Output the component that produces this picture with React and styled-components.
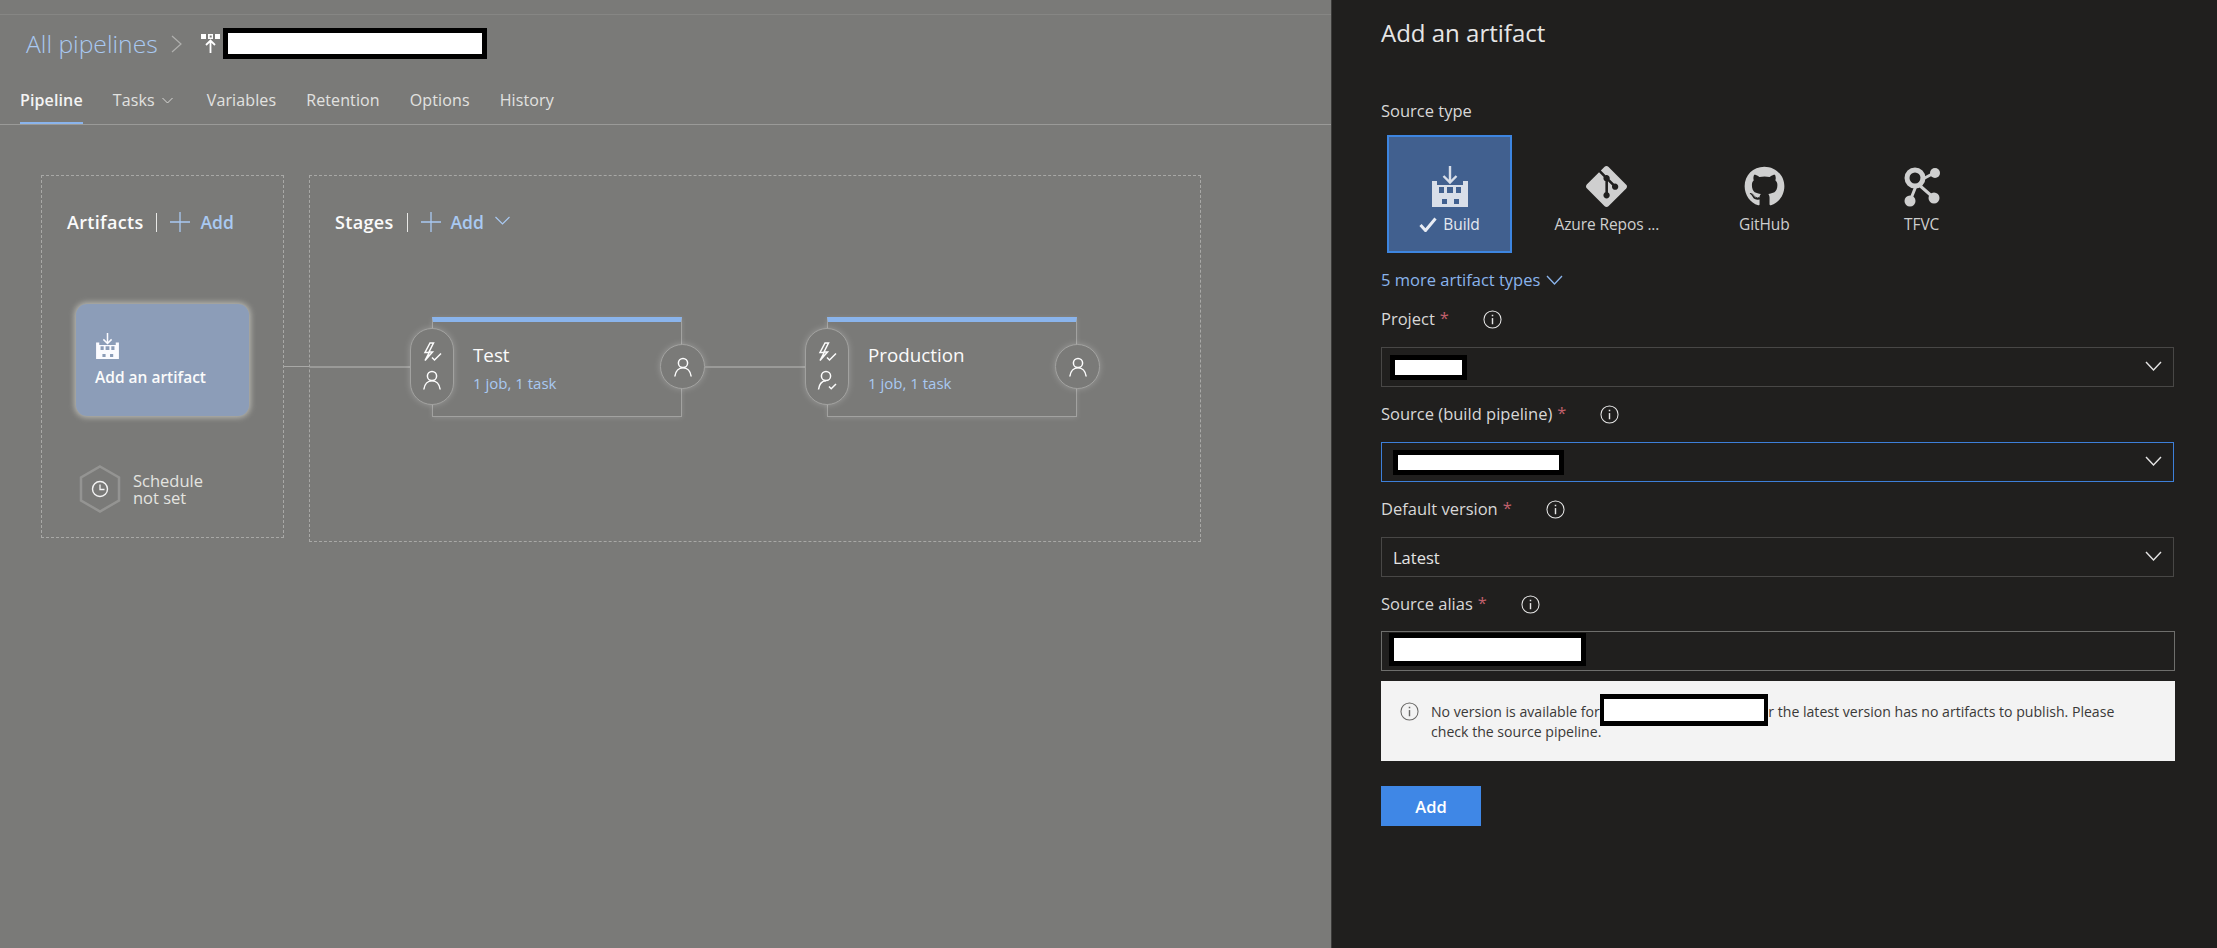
import React from "react";
import styled, { createGlobalStyle } from "styled-components";
import { FaGithub } from "react-icons/fa";
import { SiGit } from "react-icons/si";

const GlobalStyle = createGlobalStyle`
  html, body { margin: 0; padding: 0; height: 100%; overflow: hidden; }
  body { font-family: "Open Sans", "Noto Sans", "Liberation Sans", sans-serif; }
`;

const Page = styled.div`
  display: flex;
  width: 2217px;
  height: 948px;
`;
const Main = styled.main`
  flex: 1;
  background: #7a7a78;
  padding-top: 14px;
  box-sizing: border-box;
`;
const Header = styled.header`
  height: 59px;
  box-sizing: border-box;
  border-top: 1px solid #868684;
  padding: 0 0 2px 26px;
  display: flex;
  align-items: center;
`;
const Crumb = styled.a`
  font-size: 24.7px;
  font-weight: 300;
  color: #a9c9f2;
`;
const CrumbChevron = styled.svg`
  width: 11px;
  height: 18px;
  margin: 2px 19px 0 13px;
  fill: none;
  stroke: #b0b0ae;
  stroke-width: 1.2;
`;
const PipelineGlyph = styled.svg`
  width: 19px;
  height: 19px;
  margin-right: 3px;
`;
const Redact = styled.div`
  box-sizing: border-box;
  width: ${(p) => p.$w}px;
  height: ${(p) => p.$h}px;
  background: #fff;
  border: 5px solid #000;
  flex: none;
`;
const Tabs = styled.nav`
  height: 52px;
  box-sizing: border-box;
  border-bottom: 1px solid #9a9a98;
  padding: 17px 0 0 20px;
  display: flex;
  gap: 30px;
`;
const Tab = styled.a`
  height: 34px;
  box-sizing: border-box;
  line-height: 20px;
  font-size: 16px;
  letter-spacing: 0.12px;
  font-weight: ${(p) => (p.$active ? 600 : 400)};
  color: ${(p) => (p.$active ? "#f4f4f4" : "#e2e2e0")};
  border-bottom: 2px solid ${(p) => (p.$active ? "#8ab4ec" : "transparent")};
  display: flex;
  align-items: flex-start;
`;
const TabChevron = styled.svg`
  width: 11px;
  height: 20px;
  margin: 0 4px 0 7px;
  fill: none;
  stroke: #d8d8d6;
  stroke-width: 1;
`;
const Canvas = styled.section`
  display: flex;
  align-items: flex-start;
  gap: 25px;
  padding: 50px 0 0 41px;
`;
const Zone = styled.div`
  box-sizing: border-box;
  width: ${(p) => p.$w}px;
  height: ${(p) => p.$h}px;
  border: 1px dashed #a8a8a6;
  padding: 36px 0 0 25px;
`;
const ZoneHead = styled.div`
  height: 20px;
  display: flex;
  align-items: center;
`;
const ZoneTitle = styled.h3`
  margin: 0;
  font-size: 18px;
  line-height: 20px;
  font-weight: 600;
  color: #fbfbfb;
  letter-spacing: 0.32px;
`;
const Divider = styled.span`
  width: 1px;
  height: 19px;
  background: #e8e8e6;
  margin: 0 13px;
`;
const PlusIcon = styled.svg`
  width: 20px;
  height: 20px;
  stroke: #a9c9f2;
  stroke-width: 1.3;
  fill: none;
  margin-right: 10px;
`;
const AddLink = styled.a`
  font-size: 17.5px;
  font-weight: 600;
  color: #a9c9f2;
`;
const AddChevron = styled.svg`
  width: 15px;
  height: 9px;
  margin: -3px 0 0 11px;
  fill: none;
  stroke: #a9c9f2;
  stroke-width: 1.2;
`;
const ArtifactCard = styled.div`
  box-sizing: border-box;
  width: 173px;
  height: 112px;
  margin: 72px 0 0 9px;
  padding: 29px 0 0 20px;
  border-radius: 11px;
  background: #8c9db8;
  box-shadow: 0 0 6px 1px rgba(235, 235, 225, 0.65);
`;
const ArtifactLabel = styled.div`
  font-size: 15.5px;
  line-height: 20px;
  font-weight: 600;
  color: #fbfbfb;
  margin: 8px 0 0 -1px;
`;
const ScheduleRow = styled.div`
  display: flex;
  align-items: center;
  gap: 12px;
  margin: 49px 0 0 12px;
`;
const HexIcon = styled.svg`
  width: 42px;
  height: 48px;
  fill: none;
`;
const ScheduleText = styled.div`
  font-size: 16.5px;
  line-height: 17px;
  color: #e4e4e0;
`;
const StageRow = styled.div`
  display: flex;
  align-items: center;
  margin: 85px 0 0 -25px;
`;
const Connector = styled.div`
  position: relative;
  width: ${(p) => p.$w}px;
  height: 2px;
  background: #9a9a98;
  flex: none;
  ${(p) =>
    p.$lead &&
    `&::before {
      content: "";
      position: absolute;
      left: -26px;
      top: 0;
      width: 26px;
      height: 1px;
      background: #a8a8a6;
    }`}
`;
const StageNode = styled.div`
  position: relative;
  box-sizing: border-box;
  width: 295px;
  height: 100px;
  padding: 0 23px 0 22px;
  flex: none;
`;
const StageCard = styled.div`
  box-sizing: border-box;
  height: 100px;
  border: 1px solid #a2a2a0;
  border-top: 5px solid #8ab4ec;
  padding: 21px 0 0 40px;
  box-shadow: 0 1px 5px rgba(255, 255, 255, 0.15);
`;
const StageTitle = styled.div`
  font-size: 18.8px;
  line-height: 24px;
  color: #fbfbfb;
`;
const StageSub = styled.div`
  font-size: 15px;
  line-height: 20px;
  margin-top: 6px;
  color: #a9c9f2;
`;
const Pill = styled.div`
  position: absolute;
  left: 0;
  top: 11px;
  box-sizing: border-box;
  width: 44px;
  height: 77px;
  border: 1px solid #a2a2a0;
  border-radius: 22px;
  background: #7a7a78;
  box-shadow: 0 0 6px rgba(255, 255, 255, 0.25);
  display: flex;
  flex-direction: column;
  align-items: center;
  gap: 8px;
  padding-top: 13px;
`;
const Round = styled.div`
  position: absolute;
  right: 0;
  top: 27px;
  box-sizing: border-box;
  width: 45px;
  height: 45px;
  border: 1px solid #a2a2a0;
  border-radius: 50%;
  background: #7a7a78;
  box-shadow: 0 0 6px rgba(255, 255, 255, 0.25);
  display: flex;
  align-items: center;
  justify-content: center;
`;
const NodeIcon = styled.svg`
  width: 20px;
  height: 20px;
  fill: none;
  stroke: #fcfcfc;
  stroke-width: 1.5;
  flex: none;
`;
const FactorySvg = styled.svg`
  display: block;
  flex: none;
`;

const Panel = styled.aside`
  width: 886px;
  box-sizing: border-box;
  background: #201f1e;
  border-left: 1px solid #3c3b3a;
  padding: 18px 42px 0 49px;
  color: #dcdcdc;
`;
const PanelTitle = styled.h2`
  margin: 0;
  font-size: 24px;
  line-height: 30px;
  font-weight: 400;
  color: #e6e6e6;
`;
const PlainLabel = styled.div`
  margin-top: 53px;
  font-size: 16.5px;
  line-height: 20px;
  color: #d8d8d8;
`;
const TileRow = styled.div`
  display: flex;
  gap: 32.4px;
  margin: 14px 0 0 6px;
`;
const Tile = styled.div`
  box-sizing: border-box;
  width: 125px;
  height: 118px;
  flex: none;
  display: flex;
  flex-direction: column;
  align-items: center;
  padding-top: ${(p) => (p.$selected ? "29px" : "31px")};
  color: #cfcfcf;
  background: ${(p) => (p.$selected ? "#41608f" : "transparent")};
  border: ${(p) => (p.$selected ? "2px solid #3d85e0" : "none")};
  svg { display: block; flex: none; }
`;
const TileLabel = styled.div`
  margin-top: 7px;
  font-size: 15.5px;
  line-height: 20px;
  display: flex;
  align-items: center;
  gap: 6px;
  white-space: nowrap;
  letter-spacing: -0.1px;
  color: ${(p) => (p.$selected ? "#e4e8f0" : "#cfcfcf")};
`;
const CheckGlyph = styled.svg`
  width: 18px;
  height: 15px;
  fill: none;
  stroke: #e8ecf4;
  stroke-width: 3;
`;
const MoreLink = styled.a`
  display: flex;
  align-items: center;
  margin-top: 17px;
  font-size: 16.5px;
  line-height: 20px;
  color: #8ab4ec;
`;
const MoreChevron = styled.svg`
  width: 17px;
  height: 10px;
  margin-left: 6px;
  fill: none;
  stroke: #8ab4ec;
  stroke-width: 1.3;
`;
const Field = styled.div`
  margin-top: ${(p) => (p.$first ? 19 : 17)}px;
`;
const FieldLabel = styled.div`
  display: flex;
  align-items: center;
  height: 20px;
  font-size: 16.5px;
  color: #d8d8d8;
`;
const LabelText = styled.span`
  margin-top: -2px;
`;
const Required = styled.span`
  color: #c0606c;
  margin-left: 5px;
  align-self: flex-start;
  line-height: 18px;
`;
const InfoIcon = styled.svg`
  width: ${(p) => p.$size || 19}px;
  height: ${(p) => p.$size || 19}px;
  margin-left: ${(p) => p.$gap ?? 34}px;
  fill: none;
  stroke: ${(p) => p.$color || "#e6e6e6"};
  stroke-width: 1.1;
  flex: none;
`;
const Select = styled.div`
  box-sizing: border-box;
  height: 40px;
  width: 793px;
  margin-top: 18px;
  border: 1px solid ${(p) => (p.$focus ? "#3d7fd9" : "#484746")};
  display: flex;
  align-items: center;
  padding: 0 11px 0 ${(p) => p.$pad}px;
  font-size: 16.5px;
  color: #e4e4e4;
`;
const SelectValue = styled.div`
  flex: 1;
`;
const SelectChevron = styled.svg`
  width: 17px;
  height: 10px;
  margin-top: -2px;
  fill: none;
  stroke: #e4e4e4;
  stroke-width: 1.4;
`;
const TextInput = styled.div`
  box-sizing: border-box;
  height: 40px;
  width: 794px;
  margin-top: 17px;
  border: 1px solid #6e6e6c;
  padding: 1px 0 0 7px;
`;
const Message = styled.div`
  box-sizing: border-box;
  width: 794px;
  height: 80px;
  margin-top: 10px;
  padding: 21px 50px 0 19px;
  background: #f3f3f3;
  display: flex;
  align-items: flex-start;
  color: #3a3938;
`;
const MessageText = styled.p`
  margin: 0 0 0 12px;
  font-size: 14.1px;
  line-height: 20px;
`;
const InlineMask = styled.span`
  position: relative;
  display: inline-block;
  width: ${(p) => p.$w}px;
  height: 20px;
  margin-right: -8px;
  vertical-align: top;
  z-index: 1;
  &::after {
    content: "";
    position: absolute;
    left: 0;
    top: -8px;
    width: 168px;
    height: 32px;
    box-sizing: border-box;
    background: #fff;
    border: 5px solid #000;
    border-left-width: 4px;
    border-right-width: 4px;
  }
`;
const SubmitButton = styled.button`
  display: block;
  width: 100px;
  height: 40px;
  margin-top: 25px;
  border: none;
  background: #3f87e6;
  color: #fff;
  font-family: inherit;
  font-size: 16.5px;
  font-weight: 600;
`;

const Person = ({ check }) => (
  <NodeIcon viewBox="0 0 20 20">
    <circle cx={check ? 9 : 10} cy="6" r="4.6" />
    {check ? (
      <>
        <path d="M1.5 19.5C2.2 14.5 5 11 9 10.8" />
        <path d="M12 16.5l2.2 2.2L19 14" />
      </>
    ) : (
      <path d="M1.8 19.5C2.5 14 6 10.8 10 10.8s7.5 3.2 8.2 8.7" />
    )}
  </NodeIcon>
);
const Bolt = () => (
  <NodeIcon viewBox="0 0 20 20">
    <path d="M8 1L3 10.5h4.2L3 18.5l7.5-8.6H7L11.5 1zM10 15.5l2.5 2.5L19 11.5" />
  </NodeIcon>
);
const Stage = ({ name, approval }) => (
  <StageNode>
    <StageCard>
      <StageTitle>{name}</StageTitle>
      <StageSub>1 job, 1 task</StageSub>
    </StageCard>
    <Pill>
      <Bolt />
      <Person check={approval} />
    </Pill>
    <Round>
      <Person />
    </Round>
  </StageNode>
);
const Factory = ({ w = 36, h = 41, color = "currentColor" }) => (
  <FactorySvg viewBox="0 0 36 41" width={w} height={h}>
    <path fill={color} fillRule="evenodd" d="M0 41V15h5v4h26v-4h5v26zM7 21v6h5v-6zM15 21v6h6v-6zM24 21v6h5v-6zM10 33v5h5v-5zM22 33v5h5v-5z" />
    <path fill="none" stroke={color} strokeWidth="2.4" d="M18 0v16M11.5 10l6.5 6.5 6.5-6.5" />
  </FactorySvg>
);
const Tfvc = () => (
  <svg viewBox="0 0 36 41" width="36" height="41" fill="currentColor">
    <circle cx="11" cy="12" r="8" fill="none" stroke="currentColor" strokeWidth="5" />
    <circle cx="31" cy="7" r="5" />
    <circle cx="6" cy="35" r="5.5" />
    <circle cx="30" cy="32" r="5.5" />
    <path fill="none" stroke="currentColor" strokeWidth="3" d="M17 14L30 7M12 20L6 35M14 18l16 14" />
  </svg>
);
const Info = (props) => (
  <InfoIcon viewBox="0 0 20 20" {...props}>
    <circle cx="10" cy="10" r="9" />
    <path d="M10 8.5v6.5" strokeWidth="1.5" />
    <path d="M10 5v1.6" strokeWidth="1.6" />
  </InfoIcon>
);
const Label = ({ children }) => (
  <FieldLabel>
    <LabelText>{children}</LabelText>
    <Required>*</Required>
    <Info />
  </FieldLabel>
);
const Arrow = () => (
  <SelectChevron viewBox="0 0 17 10"><path d="M1 1l7.5 8L16 1" /></SelectChevron>
);

export default function App() {
  return (
    <Page>
      <GlobalStyle />
      <Main>
        <Header>
          <Crumb>All pipelines</Crumb>
          <CrumbChevron viewBox="0 0 11 18"><path d="M1 1l9 8-9 8" /></CrumbChevron>
          <PipelineGlyph viewBox="0 0 19 19">
            <path fill="#fff" d="M0 0h5v5H0zM7 0h5v5H7zM14 0h5v5h-5z" />
            <path fill="#7a7a78" d="M8.7 1.5h2v2h-2z" />
            <path fill="none" stroke="#fff" strokeWidth="1.8" d="M9.5 19V7M5 11l4.5-4.5L14 11" />
          </PipelineGlyph>
          <Redact $w={264} $h={31} />
        </Header>
        <Tabs>
          <Tab $active>Pipeline</Tab>
          <Tab>
            Tasks
            <TabChevron viewBox="0 0 11 20"><path d="M0.5 8l5 5 5-5" /></TabChevron>
          </Tab>
          <Tab>Variables</Tab>
          <Tab>Retention</Tab>
          <Tab>Options</Tab>
          <Tab>History</Tab>
        </Tabs>
        <Canvas>
          <Zone $w={243} $h={363}>
            <ZoneHead>
              <ZoneTitle>Artifacts</ZoneTitle>
              <Divider />
              <PlusIcon viewBox="0 0 20 20"><path d="M10 0v20M0 10h20" /></PlusIcon>
              <AddLink>Add</AddLink>
            </ZoneHead>
            <ArtifactCard>
              <Factory w={23} h={26} color="#fbfbff" />
              <ArtifactLabel>Add an artifact</ArtifactLabel>
            </ArtifactCard>
            <ScheduleRow>
              <HexIcon viewBox="0 0 42 48">
                <path d="M21 1.5L40 12.5v23L21 46.5 2 35.5v-23z" stroke="#949492" strokeWidth="2.5" />
                <circle cx="21" cy="24" r="7.5" stroke="#f4f4f4" strokeWidth="1.4" />
                <path d="M21 19.5V24.5h4.5" stroke="#f4f4f4" strokeWidth="1.3" />
              </HexIcon>
              <ScheduleText>Schedule<br />not set</ScheduleText>
            </ScheduleRow>
          </Zone>
          <Zone $w={892} $h={367}>
            <ZoneHead>
              <ZoneTitle>Stages</ZoneTitle>
              <Divider />
              <PlusIcon viewBox="0 0 20 20"><path d="M10 0v20M0 10h20" /></PlusIcon>
              <AddLink>Add</AddLink>
              <AddChevron viewBox="0 0 15 9"><path d="M0.5 1l7 7 7-7" /></AddChevron>
            </ZoneHead>
            <StageRow>
              <Connector $w={100} $lead />
              <Stage name="Test" />
              <Connector $w={100} />
              <Stage name="Production" approval />
            </StageRow>
          </Zone>
        </Canvas>
      </Main>
      <Panel>
        <PanelTitle>Add an artifact</PanelTitle>
        <PlainLabel>Source type</PlainLabel>
        <TileRow>
          <Tile $selected>
            <Factory color="#d8dee8" />
            <TileLabel $selected>
              <CheckGlyph viewBox="0 0 18 15"><path d="M1.5 8l5 5.5L16.5 1.5" /></CheckGlyph>
              Build
            </TileLabel>
          </Tile>
          <Tile>
            <SiGit size={41} />
            <TileLabel>Azure Repos ...</TileLabel>
          </Tile>
          <Tile>
            <FaGithub size={41} />
            <TileLabel>GitHub</TileLabel>
          </Tile>
          <Tile>
            <Tfvc />
            <TileLabel>TFVC</TileLabel>
          </Tile>
        </TileRow>
        <MoreLink>
          5 more artifact types
          <MoreChevron viewBox="0 0 17 10"><path d="M1 1l7.5 8L16 1" /></MoreChevron>
        </MoreLink>
        <Field $first>
          <Label>Project</Label>
          <Select $pad={8}>
            <SelectValue><Redact $w={77} $h={25} /></SelectValue>
            <Arrow />
          </Select>
        </Field>
        <Field>
          <Label>Source (build pipeline)</Label>
          <Select $focus $pad={11}>
            <SelectValue><Redact $w={171} $h={25} /></SelectValue>
            <Arrow />
          </Select>
        </Field>
        <Field>
          <Label>Default version</Label>
          <Select $pad={11}>
            <SelectValue>Latest</SelectValue>
            <Arrow />
          </Select>
        </Field>
        <Field>
          <Label>Source alias</Label>
          <TextInput><Redact $w={197} $h={33} /></TextInput>
        </Field>
        <Message>
          <Info $size={19} $gap={0} $color="#6a6967" />
          <MessageText>
            No version is available for<InlineMask $w={168} />or the latest version has no artifacts to publish. Please check the source pipeline.
          </MessageText>
        </Message>
        <SubmitButton>Add</SubmitButton>
      </Panel>
    </Page>
  );
}
